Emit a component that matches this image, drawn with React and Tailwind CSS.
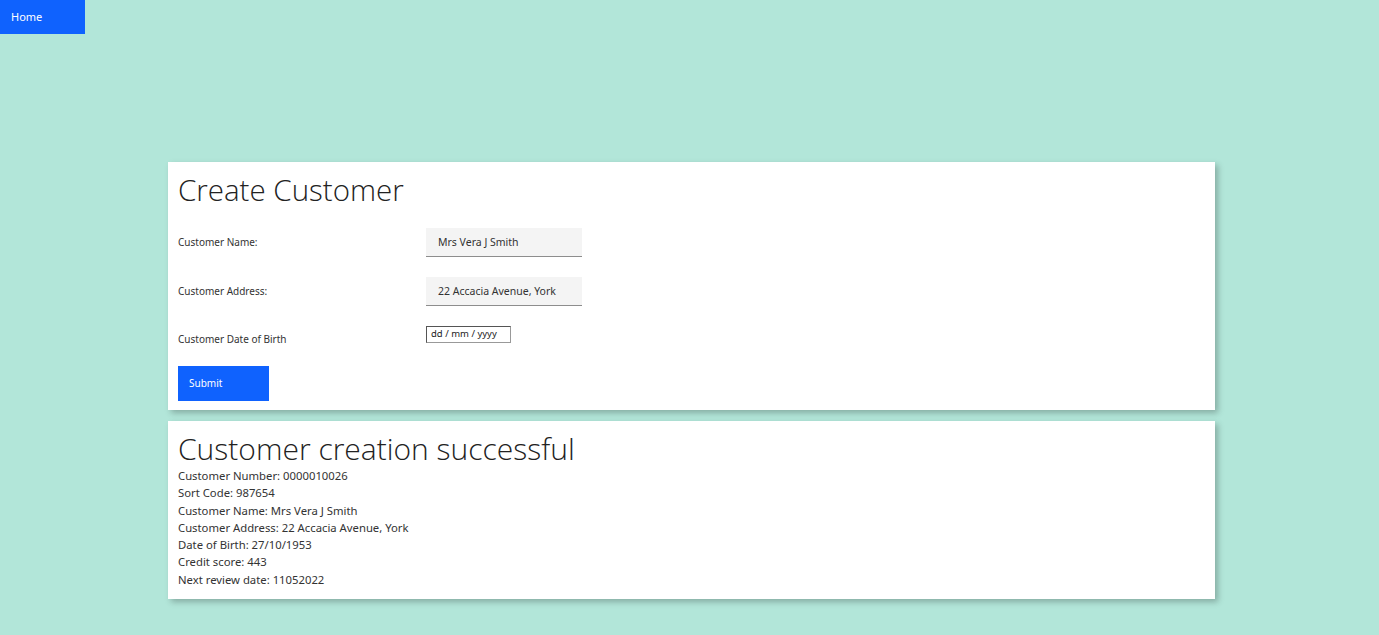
export default function App() {
  const details = [
    ['Customer Number', '0000010026'],
    ['Sort Code', '987654'],
    ['Customer Name', 'Mrs Vera J Smith'],
    ['Customer Address', '22 Accacia Avenue, York'],
    ['Date of Birth', '27/10/1953'],
    ['Credit score', '443'],
    ['Next review date', '11052022'],
  ];

  return (
    <div className="min-h-[635px] bg-[#b2e6d9] font-['Noto_Sans',sans-serif] text-[#161616]">
      <nav className="flex h-[34px]">
        <button className="flex w-[85px] items-center bg-[#0f62fe] pl-[11px] text-[11px] text-white">Home</button>
      </nav>

      <div className="ml-[168px] mt-[128px] w-[1047px] space-y-[11px]">
        <section className="h-[248px] bg-white px-[10px] pt-[10px] shadow-[3px_3px_6px_rgba(0,0,0,0.25)]">
          <h1 className="font-['Open_Sans',sans-serif] text-[29.5px] leading-[36px] font-light text-[#222]">Create Customer</h1>

          <div className="mt-[20px] flex items-center">
            <label className="w-[248px] text-[10px] text-[#333]">Customer Name:</label>
            <input
              defaultValue="Mrs Vera J Smith"
              className="h-[29px] w-[156px] border-b border-[#8d8d8d] bg-[#f4f4f4] px-[12px] text-[10.5px] text-[#333] outline-none"
            />
          </div>

          <div className="mt-[20px] flex items-center">
            <label className="w-[248px] text-[10px] text-[#333]">Customer Address:</label>
            <input
              defaultValue="22 Accacia Avenue, York"
              className="h-[29px] w-[156px] border-b border-[#8d8d8d] bg-[#f4f4f4] px-[12px] text-[10.5px] text-[#333] outline-none"
            />
          </div>

          <div className="mt-[20px] flex items-start">
            <label className="w-[248px] pt-[6px] text-[10px] text-[#333]">Customer Date of Birth</label>
            <div className="flex h-[17px] w-[85px] items-center border border-[#999] border-t-[#555] border-l-[#555] px-[4px] text-[9.5px] text-[#222]">
              dd / mm / yyyy
            </div>
          </div>

          <button className="mt-[19px] h-[35px] w-[91px] bg-[#0f62fe] pl-[11px] text-left text-[10px] text-white">Submit</button>
        </section>

        <section className="h-[178px] bg-white px-[10px] pt-[10px] shadow-[3px_3px_6px_rgba(0,0,0,0.25)]">
          <h2 className="font-['Open_Sans',sans-serif] text-[30px] leading-[36px] font-light text-[#222]">Customer creation successful</h2>
          <div className="text-[11.3px] leading-[17.3px] text-[#333]">
            {details.map(([label, value]) => (
              <p key={label}>
                {label}: {value}
              </p>
            ))}
          </div>
        </section>
      </div>
    </div>
  );
}
